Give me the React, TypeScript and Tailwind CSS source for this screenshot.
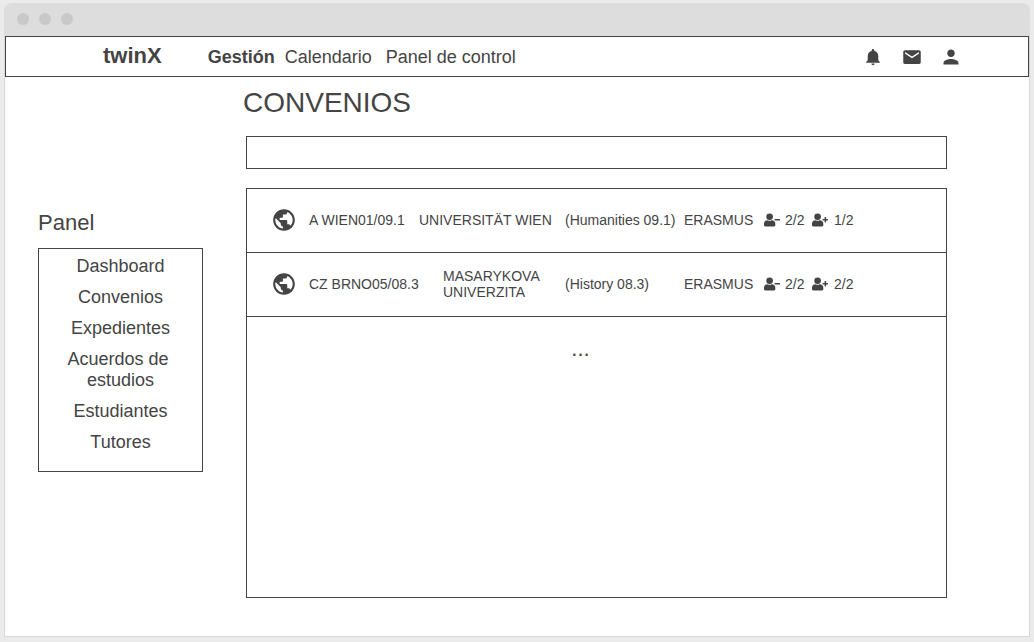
import React from "react";
import { MdPublic } from "react-icons/md";
import { IoMdMail, IoMdNotifications, IoMdPerson } from "react-icons/io";

type Agreement = {
  code: string;
  university: React.ReactNode;
  field: string;
  program: string;
  outgoing: string;
  incoming: string;
};

const agreements: Agreement[] = [
  {
    code: "A WIEN01/09.1",
    university: "UNIVERSITÄT WIEN",
    field: "(Humanities 09.1)",
    program: "ERASMUS",
    outgoing: "2/2",
    incoming: "1/2",
  },
  {
    code: "CZ BRNO05/08.3",
    university: (
      <span className="block pl-6">
        MASARYKOVA
        <br />
        UNIVERZITA
      </span>
    ),
    field: "(History 08.3)",
    program: "ERASMUS",
    outgoing: "2/2",
    incoming: "2/2",
  },
];

const panelLinks: React.ReactNode[] = [
  "Dashboard",
  "Convenios",
  "Expedientes",
  <>
    Acuerdos de&nbsp;
    <br />
    estudios
  </>,
  "Estudiantes",
  "Tutores",
];

function UserIcon({ sign }: { sign: "minus" | "plus" }) {
  return (
    <svg viewBox="0 0 16 14" className="h-[14px] w-4 shrink-0" fill="currentColor" aria-hidden="true">
      <circle cx="5.6" cy="3.8" r="3.3" />
      <path d="M3.4 7.3c.7.4 1.4.5 2.2.5s1.500-.1 2.200-.5c2.100 0 3.500 1.500 3.500 3.500v1.500c0 .7-.5 1.200-1.200 1.200H1.200C.5 13.500 0 13 0 12.300v-1.500c0-2 1.400-3.500 3.400-3.500z" />
      <path d="M11 5.900h4.600c.2 0 .4.2.4.4v.7c0 .2-.2.4-.4.4H11c-.2 0-.4-.2-.4-.4v-.7c0-.2.2-.4.400-.4z" />
      {sign === "plus" && (
        <path d="M13 4h.700c.2 0 .4.200.4.400v4.600c0 .2-.2.400-.4.400H13c-.2 0-.400-.2-.400-.4V4.400c0-.2.2-.4.400-.4z" />
      )}
    </svg>
  );
}

function TitleBar() {
  return (
    <div className="flex h-[33px] items-center gap-[10px] rounded-t-lg bg-[#ddd] px-[13px] pb-px">
      <span className="size-3 rounded-full bg-[#c9c9c9]" />
      <span className="size-3 rounded-full bg-[#c9c9c9]" />
      <span className="size-3 rounded-full bg-[#c9c9c9]" />
    </div>
  );
}

function TopBar() {
  return (
    <header className="flex h-[41px] items-center justify-between border border-[#444] pr-[67px] pl-[97px]">
      <div className="flex items-baseline">
        <a href="#inicio" className="mr-[46px] text-[22px] leading-6 font-bold">
          twinX
        </a>
        <nav className="flex items-baseline gap-[10px] text-[18px] leading-6">
          <a href="#gestion" className="font-bold">
            Gestión
          </a>
          <a href="#calendario">Calendario</a>
          <a href="#control" className="ml-1">
            Panel de control
          </a>
        </nav>
      </div>
      <div className="flex items-center gap-[19px]">
        <button type="button" aria-label="Notificaciones">
          <IoMdNotifications className="size-5" />
        </button>
        <button type="button" aria-label="Mensajes">
          <IoMdMail className="size-5" />
        </button>
        <button type="button" aria-label="Perfil">
          <IoMdPerson className="size-5" />
        </button>
      </div>
    </header>
  );
}

function SidePanel() {
  return (
    <aside className="mt-[133px] w-[165px] shrink-0">
      <h2 className="mb-3 text-[22px] leading-[26px]">Panel</h2>
      <ul className="flex flex-col gap-[10px] border border-[#444] pt-[7px] pb-[18px] text-center text-[18px] leading-[21px]">
        {panelLinks.map((label, i) => (
          <li key={i}>
            <a href="#panel">{label}</a>
          </li>
        ))}
      </ul>
    </aside>
  );
}

function AgreementsTable() {
  return (
    <table className="w-full table-fixed border-separate border-spacing-0 text-left text-[14px] leading-4">
      <colgroup>
        <col className="w-[62px]" />
        <col className="w-[110px]" />
        <col className="w-[146px]" />
        <col className="w-[119px]" />
        <col className="w-[80px]" />
        <col className="w-[48px]" />
        <col />
      </colgroup>
      <tbody>
        {agreements.map((a) => (
          <tr
            key={a.code}
            className="h-16 whitespace-nowrap [&>td]:border-b [&>td]:border-[#444] [&>td]:pb-[2px]"
          >
            <td className="pl-6">
              <MdPublic className="size-[26px]" />
            </td>
            <td>{a.code}</td>
            <td>{a.university}</td>
            <td>{a.field}</td>
            <td>{a.program}</td>
            <td>
              <span className="flex items-center gap-[5px]">
                <UserIcon sign="minus" />
                {a.outgoing}
              </span>
            </td>
            <td>
              <span className="flex items-center gap-[6px]">
                <UserIcon sign="plus" />
                {a.incoming}
              </span>
            </td>
          </tr>
        ))}
      </tbody>
    </table>
  );
}

export default function App() {
  return (
    <div className="flex min-h-screen flex-col bg-[#ebebeb] px-1 pt-[3px] pb-[5px] font-['Liberation_Sans',Arial,sans-serif] text-[#444]">
      <TitleBar />
      <div className="flex flex-1 flex-col border-x border-b border-[#d8d8d8] bg-white">
        <TopBar />
        <div className="flex flex-1 items-start pr-[82px] pl-[33px]">
          <SidePanel />
          <main className="ml-[43px] flex min-w-0 flex-1 flex-col self-stretch pb-[38px]">
            <h1 className="-ml-[3px] pt-[10px] text-[28px] leading-8">CONVENIOS</h1>
            <input
              type="text"
              aria-label="Buscar convenios"
              className="mt-[17px] h-[33px] w-full border border-[#444] bg-white px-2 text-[14px] outline-none"
            />
            <section className="mt-[19px] flex-1 border border-[#444]">
              <AgreementsTable />
              <p className="mt-5 pr-8 text-center text-[22px] leading-6">...</p>
            </section>
          </main>
        </div>
      </div>
    </div>
  );
}
